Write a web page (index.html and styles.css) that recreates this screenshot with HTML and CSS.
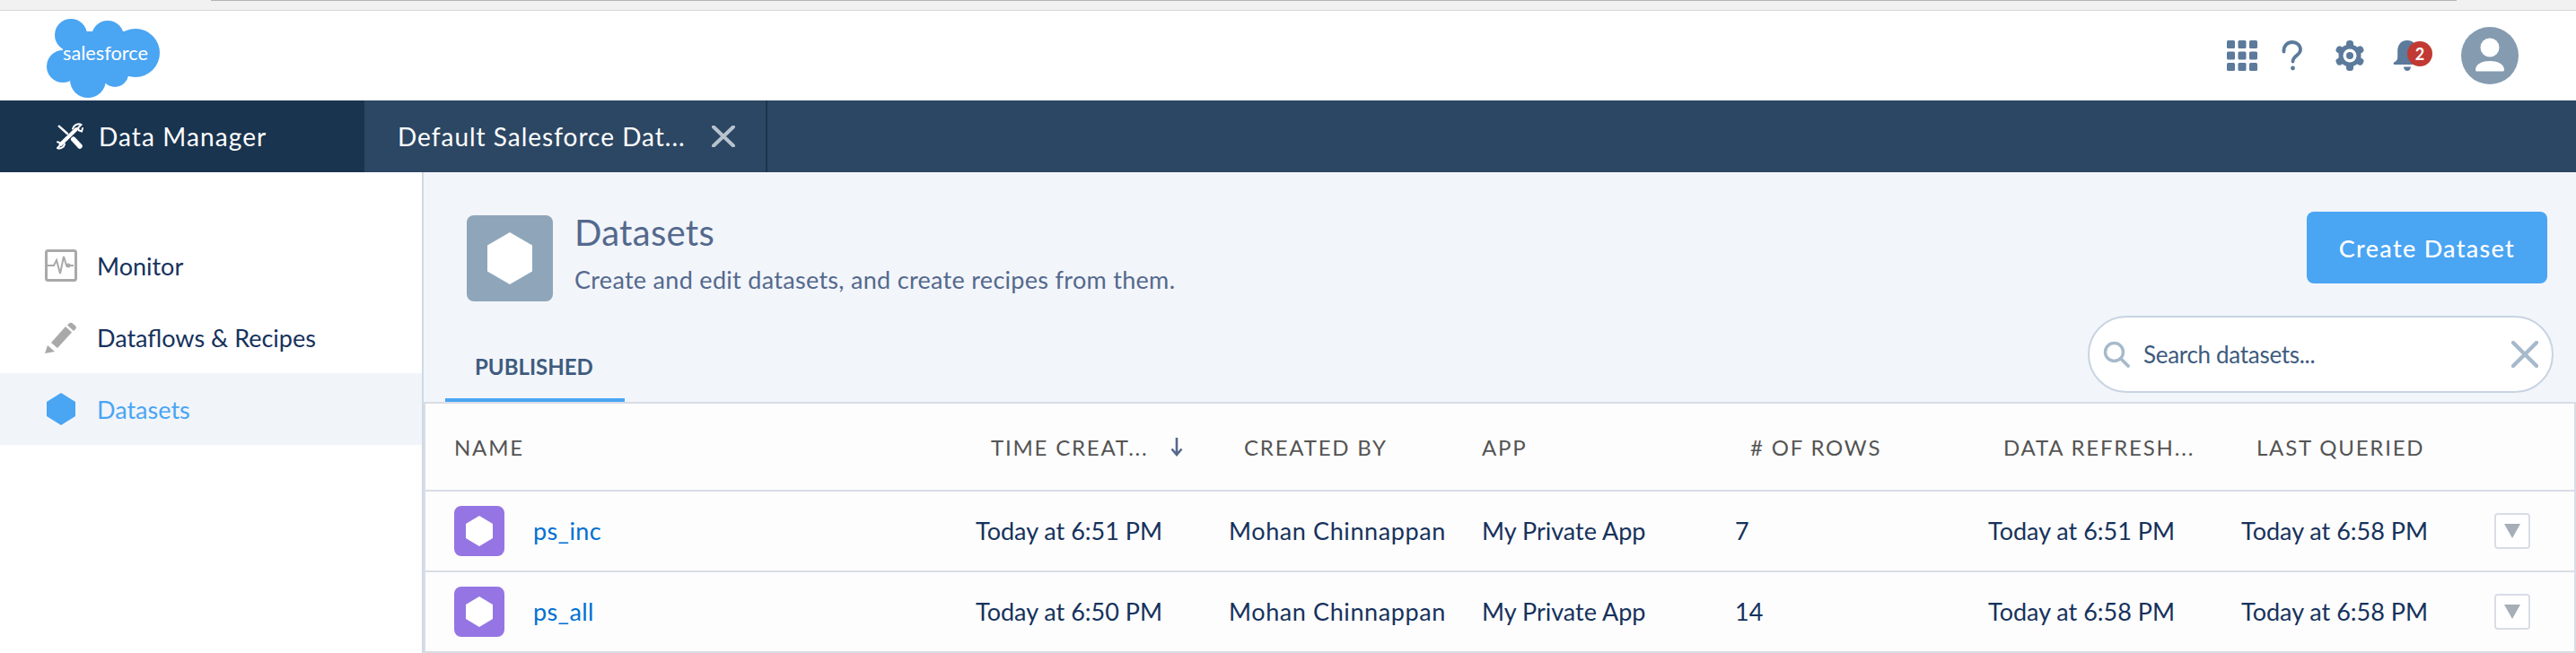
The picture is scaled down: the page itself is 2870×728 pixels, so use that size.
FILE: index.html
```html
<!DOCTYPE html>
<html lang="en">
<head>
<meta charset="utf-8">
<title>Data Manager</title>
<link rel="stylesheet" href="styles.css">
</head>
<body>
<div class="browser-strip"><div class="browser-strip-line"></div></div>
<header class="global-header">
  <svg class="logo" viewBox="0 0 126 88" width="126" height="88">
    <g fill="#4aa5f3">
      <circle cx="27" cy="18" r="18"/><circle cx="68" cy="20" r="18"/><circle cx="99" cy="38" r="27"/>
      <circle cx="18" cy="53" r="18"/><circle cx="46" cy="68" r="20"/><circle cx="76" cy="61" r="15"/>
      <rect x="18" y="14" width="80" height="50"/>
    </g>
    <text class="logo-text" x="18" y="46" textLength="95" lengthAdjust="spacingAndGlyphs">salesforce</text>
  </svg>
  <div class="header-icons">
    <svg class="hicon" viewBox="0 0 34 34" width="34" height="34">
      <g fill="#5c7a9b">
        <rect x="0" y="0" width="9" height="9" rx="1.5"/><rect x="12.5" y="0" width="9" height="9" rx="1.5"/><rect x="25" y="0" width="9" height="9" rx="1.5"/>
        <rect x="0" y="12.5" width="9" height="9" rx="1.5"/><rect x="12.5" y="12.5" width="9" height="9" rx="1.5"/><rect x="25" y="12.5" width="9" height="9" rx="1.5"/>
        <rect x="0" y="25" width="9" height="9" rx="1.5"/><rect x="12.5" y="25" width="9" height="9" rx="1.5"/><rect x="25" y="25" width="9" height="9" rx="1.5"/>
      </g>
    </svg>
    <svg class="hicon help" viewBox="0 0 34 34" width="34" height="34">
      <path d="M7.500 12.500C7 5.500 12 2 17 2s9 3.500 9 8.500c0 6-8.500 6.500-8.500 13" fill="none" stroke="#5c7a9b" stroke-width="3.800" stroke-linecap="round"/>
      <circle cx="17.500" cy="31" r="2.400" fill="#5c7a9b"/>
    </svg>
    <svg class="hicon gear" viewBox="0 0 34 34" width="34" height="34">
      <g fill="#5c7a9b">
        <rect x="13" y="0" width="8" height="34" rx="3.5"/>
        <rect x="13" y="0" width="8" height="34" rx="3.5" transform="rotate(60 17 17)"/>
        <rect x="13" y="0" width="8" height="34" rx="3.5" transform="rotate(120 17 17)"/>
        <circle cx="17" cy="17" r="12.500"/>
      </g>
      <circle cx="17" cy="17" r="7.500" fill="#fff"/>
      <circle cx="17" cy="17" r="4" fill="#5c7a9b"/>
    </svg>
    <div class="bell">
      <svg viewBox="0 0 34 34" width="34" height="34">
        <path d="M16 0c6.500 0 10.500 4.500 10.500 11v8c0 3 2 4.500 4 5.500 1.200.7.800 2.500-.8 2.500H2c-1.600 0-2-1.800-.8-2.500 2-1 4-2.500 4-5.500v-8C5.500 4.500 9.500 0 16 0z" fill="#5c7a9b"/>
        <path d="M12 29.500h8c0 2.500-1.800 4.500-4 4.500s-4-2-4-4.500z" fill="#5c7a9b"/>
      </svg>
      <span class="badge">2</span>
    </div>
    <div class="avatar">
      <svg viewBox="0 0 64 64" width="64" height="64">
        <circle cx="32" cy="23" r="10.500" fill="#fff"/>
        <path d="M16 48c0-7 8-10 16-10s16 3 16 10c0 .8-.7 1.500-1.500 1.500h-29C16.700 49.500 16 48.800 16 48z" fill="#fff"/>
      </svg>
    </div>
  </div>
</header>
<nav class="app-nav">
  <div class="brand">
    <svg class="brand-icon" viewBox="0 0 30 30" width="30" height="30">
      <g fill="none" stroke="#fff" stroke-linecap="round">
        <path d="M2.700 3.700L12 12" stroke-width="2.400"/>
        <path d="M18.700 18.200L26 26" stroke-width="5.500"/>
        <path d="M4.500 24L22 7" stroke-width="4"/>
        <path d="M18 6.500C19 2.500 24 0 27.500 2L24 5.500l1 3 3 1L29 6" stroke-width="2"/>
        <path d="M9 23.500C8.500 27 4 29.500 1 28l3.500-3.500-.8-2.500-2.700-.7" stroke-width="2"/>
      </g>
    </svg>
    <span class="brand-label">Data Manager</span>
  </div>
  <div class="tab">
    <span class="tab-label">Default Salesforce Dat...</span>
    <svg class="tab-close" viewBox="0 0 26 24" width="26" height="24">
      <path d="M2 1.500L24 22.500M24 1.500L2 22.500" stroke="#b8c3ce" stroke-width="4" stroke-linecap="round"/>
    </svg>
  </div>
</nav>
<div class="workspace">
  <aside class="sidebar">
    <a class="side-item">
      <span class="side-icon">
        <svg viewBox="0 0 36 36" width="36" height="36">
          <rect x="1.500" y="1.500" width="33" height="33" rx="2" fill="none" stroke="#a9a9a9" stroke-width="3"/>
          <path d="M3 18h7l3-6 4 15 4-19 3 10h8" fill="none" stroke="#a9a9a9" stroke-width="2"/>
          <circle cx="26" cy="18" r="2.500" fill="#a9a9a9"/>
        </svg>
      </span>
      <span>Monitor</span>
    </a>
    <a class="side-item">
      <span class="side-icon">
        <svg viewBox="0 0 36 36" width="36" height="36">
          <path d="M7 24L23 6l7 6.500L14 30z" fill="#a9a9a9"/>
          <path d="M27 2.500c1-1 2.500-1 3.500-.2l3.500 3c1 1 1.200 2.500.2 3.500L32 11l-7-6.500z" fill="#a9a9a9"/>
          <path d="M0 36l3-9 8 7z" fill="#a9a9a9"/>
        </svg>
      </span>
      <span>Dataflows &amp; Recipes</span>
    </a>
    <a class="side-item is-active">
      <span class="side-icon">
        <svg viewBox="0 0 36 36" width="36" height="36">
          <path d="M18 0L34 10v16L18 36 2 26V10z" fill="#4aa5f3"/>
        </svg>
      </span>
      <span>Datasets</span>
    </a>
  </aside>
  <main class="content">
    <section class="page-head">
      <div class="page-icon">
        <svg viewBox="0 0 50 58" width="50" height="58"><path d="M25 0L50 14.500v29L25 58 0 43.500v-29z" fill="#fff"/></svg>
      </div>
      <div class="page-titles">
        <h1 class="page-title">Datasets</h1>
        <p class="page-sub">Create and edit datasets, and create recipes from them.</p>
      </div>
      <button class="primary-btn">Create Dataset</button>
    </section>
    <section class="tab-row">
      <div class="sub-tab">PUBLISHED</div>
      <div class="search">
        <svg class="search-icon" viewBox="0 0 30 30" width="30" height="30">
          <circle cx="12.500" cy="12.500" r="10" fill="none" stroke="#a7bacb" stroke-width="3.400"/>
          <path d="M20 20l8 8" stroke="#a7bacb" stroke-width="3.800" stroke-linecap="round"/>
        </svg>
        <span class="search-text">Search datasets...</span>
        <svg class="search-clear" viewBox="0 0 30 30" width="30" height="30">
          <path d="M2 2l26 26M28 2L2 28" stroke="#a7bacb" stroke-width="4.400" stroke-linecap="round"/>
        </svg>
      </div>
    </section>
    <section class="table">
      <div class="row head-row">
        <div class="cell name-head">NAME</div>
        <div class="cell hcell sorted">TIME CREAT...
          <svg class="sort-arrow" viewBox="0 0 16 22" width="16" height="22"><path d="M8 1v18M2.500 13.500L8 20l5.500-6.500" fill="none" stroke="#54698d" stroke-width="2.600"/></svg>
        </div>
        <div class="cell hcell">CREATED BY</div>
        <div class="cell hcell flush">APP</div>
        <div class="cell hcell"># OF ROWS</div>
        <div class="cell hcell">DATA REFRESH...</div>
        <div class="cell hcell">LAST QUERIED</div>
      </div>
      <div class="row data-row">
        <div class="cell name-cell">
          <span class="ds-icon"><svg viewBox="0 0 30 34" width="30" height="34"><path d="M15 0L30 9v16L15 34 0 25V9z" fill="#fff"/></svg></span>
          <a class="ds-link">ps_inc</a>
        </div>
        <div class="cell">Today at 6:51 PM</div>
        <div class="cell owner">Mohan Chinnappan</div>
        <div class="cell">My Private App</div>
        <div class="cell">7</div>
        <div class="cell">Today at 6:51 PM</div>
        <div class="cell">Today at 6:58 PM</div>
        <div class="cell"><span class="menu-btn"><i class="menu-caret"></i></span></div>
      </div>
      <div class="row data-row">
        <div class="cell name-cell">
          <span class="ds-icon"><svg viewBox="0 0 30 34" width="30" height="34"><path d="M15 0L30 9v16L15 34 0 25V9z" fill="#fff"/></svg></span>
          <a class="ds-link">ps_all</a>
        </div>
        <div class="cell">Today at 6:50 PM</div>
        <div class="cell owner">Mohan Chinnappan</div>
        <div class="cell">My Private App</div>
        <div class="cell">14</div>
        <div class="cell">Today at 6:58 PM</div>
        <div class="cell">Today at 6:58 PM</div>
        <div class="cell"><span class="menu-btn"><i class="menu-caret"></i></span></div>
      </div>
    </section>
  </main>
</div>
</body>
</html>
```

FILE: styles.css
```css
* { box-sizing: border-box; }
html, body { margin: 0; padding: 0; }
body {
  width: 2870px;
  height: 728px;
  overflow: hidden;
  background: #fff;
  font-family: Lato, "Open Sans", sans-serif;
  font-size: 27px;
  color: #16325c;
}
.browser-strip { height: 12px; background: #f1f1f1; border-bottom: 1px solid #d5d5d5; }
.browser-strip-line { height: 1px; width: 2502px; margin-left: 235px; background: #b4b4b4; }

.global-header {
  height: 100px;
  display: flex;
  align-items: center;
  justify-content: space-between;
  padding: 0 64px 0 52px;
}
.logo { display: block; margin-top: 6px; }
.logo-text { font-family: Lato, sans-serif; font-size: 22px; fill: #fff; }
.header-icons { display: flex; align-items: center; }
.hicon { display: block; }
.help { margin-left: 22px; }
.gear { margin-left: 30px; }
.bell { position: relative; width: 34px; height: 34px; margin-left: 31px; margin-right: 42px; }
.bell svg { display: block; }
.badge {
  position: absolute;
  left: 16px;
  top: 1px;
  width: 28px;
  height: 28px;
  border-radius: 50%;
  background: #c23934;
  color: #fff;
  font-size: 18px;
  font-weight: 700;
  line-height: 28px;
  text-align: center;
}
.avatar { width: 64px; height: 64px; border-radius: 50%; background: #849bb0; }
.avatar svg { display: block; }

.app-nav { height: 80px; display: flex; background: #2c4763; color: #fff; }
.brand {
  width: 406px;
  background: #19344f;
  display: flex;
  align-items: center;
  padding-left: 63px;
  gap: 17px;
}
.brand-label { font-size: 28px; letter-spacing: 1.1px; }
.tab {
  width: 449px;
  display: flex;
  align-items: center;
  padding-left: 37px;
  border-right: 2px solid #1d344d;
}
.tab-label { font-size: 28px; letter-spacing: 1px; width: 350px; white-space: nowrap; }
.tab-close { display: block; }

.workspace { display: flex; height: 536px; }
.sidebar { width: 472px; flex: none; padding-top: 64px; border-right: 2px solid #cfd9e6; }
.side-item { height: 80px; display: flex; align-items: center; color: #16325c; }
.side-icon { width: 36px; height: 36px; margin-left: 50px; margin-right: 22px; flex: none; }
.side-icon svg { display: block; }
.is-active { background: #f1f5fa; color: #4aa5f3; }

.content { flex: 1; min-width: 0; background: #f2f5fa; display: flex; flex-direction: column; }
.page-head { height: 144px; display: flex; padding: 48px 32px 0 48px; }
.page-icon {
  width: 96px;
  height: 96px;
  flex: none;
  background: #8fa6ba;
  border-radius: 8px;
  display: flex;
  align-items: center;
  justify-content: center;
}
.page-icon svg { display: block; }
.page-titles { margin-left: 24px; flex: 1; margin-top: -5px; }
.page-title { margin: 0; font-size: 40px; font-weight: 400; letter-spacing: .3px; line-height: 48px; color: #54698d; }
.page-sub { margin: 11px 0 0; font-size: 27px; letter-spacing: .3px; line-height: 36px; color: #54698d; }
.primary-btn {
  width: 268px;
  height: 80px;
  margin-top: -4px;
  border: 0;
  border-radius: 8px;
  background: #4aa5f3;
  color: #fff;
  font: 500 27px Lato, sans-serif;
  letter-spacing: 1.3px;
}

.tab-row {
  height: 112px;
  display: flex;
  justify-content: space-between;
  align-items: flex-end;
  padding: 0 25px 0 24px;
}
.sub-tab {
  width: 200px;
  height: 76px;
  padding: 22px 0 0 33px;
  border-bottom: 4px solid #4aa5f3;
  font-size: 24px;
  font-weight: 700;
  color: #3e5b7e;
}
.search {
  width: 519px;
  height: 86px;
  margin-bottom: 10px;
  display: flex;
  align-items: center;
  background: #fff;
  border: 2px solid #c8d4e2;
  border-radius: 43px;
  padding: 0 15px 0 15px;
}
.search-icon, .search-clear { display: block; flex: none; }
.search-text { flex: 1; margin-left: 15px; color: #3e5b7e; font-size: 26px; letter-spacing: -.3px; }

.table { flex: 1; background: #fdfdfd; border-top: 2px solid #d8dde6; border-left: 2px solid #d8dde6; border-right: 2px solid #d8dde6; }
.row {
  display: grid;
  grid-template-columns: 613px 282px 282px 282px 282px 282px 282px 1fr;
  align-items: center;
  border-bottom: 2px solid #d8dde6;
}
.head-row { height: 98px; font-size: 24px; letter-spacing: 1.8px; color: #545454; }
.data-row { height: 90px; }
.cell { white-space: nowrap; }
.data-row .cell { padding-bottom: 2px; }
.owner { letter-spacing: .6px; }
.name-head { padding-left: 32px; }
.hcell { padding-left: 17px; }
.flush { padding-left: 0; }
.sorted { display: flex; align-items: center; gap: 23px; }
.sort-arrow { display: block; }
.data-row .name-cell { display: flex; align-items: center; padding: 0 0 0 32px; }
.ds-icon {
  width: 56px;
  height: 56px;
  flex: none;
  background: #9575e3;
  border-radius: 8px;
  display: flex;
  align-items: center;
  justify-content: center;
}
.ds-icon svg { display: block; }
.ds-link { margin-left: 32px; margin-top: -2px; letter-spacing: .4px; color: #0070d2; }
.menu-btn {
  display: flex;
  width: 40px;
  height: 40px;
  align-items: center;
  justify-content: center;
  background: #fff;
  border: 2px solid #d8dde6;
  border-radius: 4px;
  margin-top: 2px;
}
.menu-caret {
  width: 0;
  height: 0;
  border-left: 9px solid transparent;
  border-right: 9px solid transparent;
  border-top: 16px solid #a6aeb8;
}
```
